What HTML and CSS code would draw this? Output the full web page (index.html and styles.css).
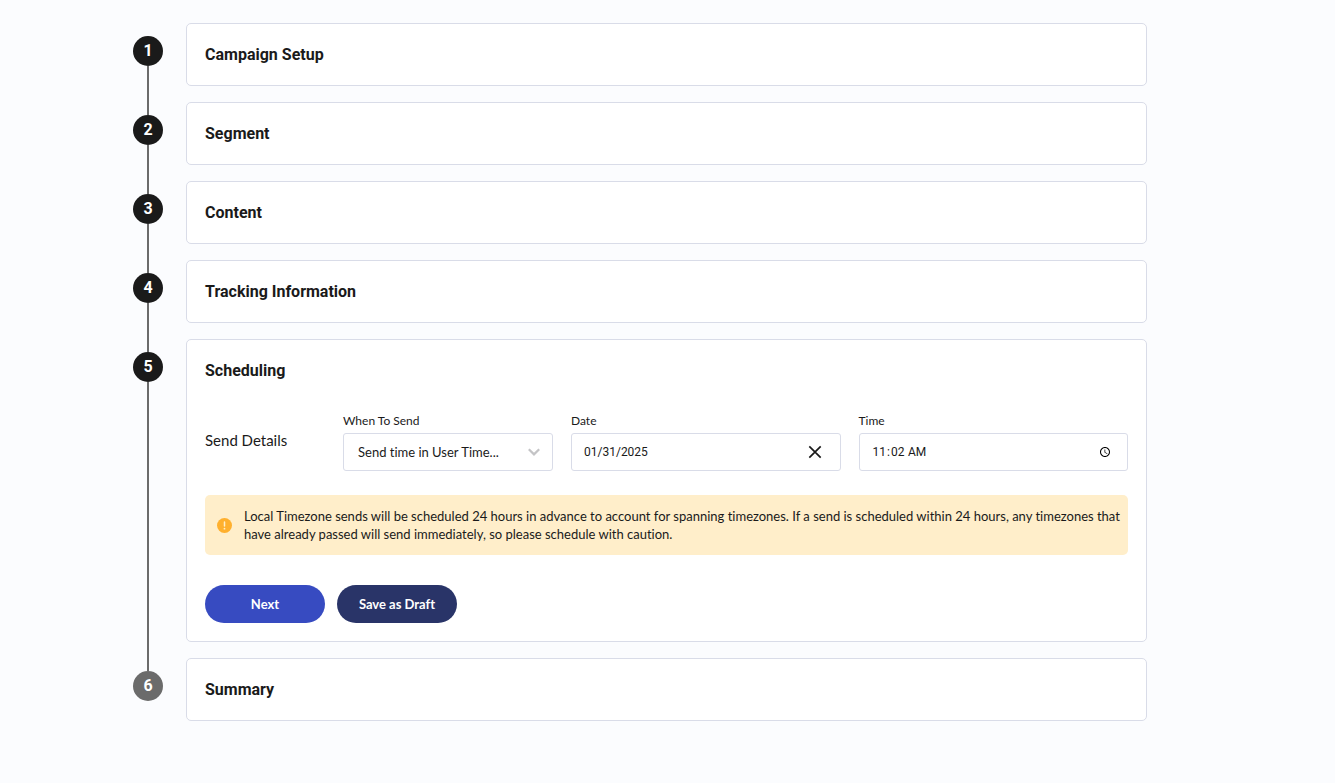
FILE: index.html
```html
<!DOCTYPE html>
<html lang="en">
<head>
<meta charset="utf-8">
<title>Campaign Scheduling</title>
<link rel="stylesheet" href="styles.css">
</head>
<body>
<main>
  <ol class="steps">
    <li class="step">
      <div class="rail"><span class="dot">1</span></div>
      <section class="card"><h2 class="title">Campaign Setup</h2></section>
    </li>
    <li class="step">
      <div class="rail"><span class="dot">2</span></div>
      <section class="card"><h2 class="title">Segment</h2></section>
    </li>
    <li class="step">
      <div class="rail"><span class="dot">3</span></div>
      <section class="card"><h2 class="title">Content</h2></section>
    </li>
    <li class="step">
      <div class="rail"><span class="dot">4</span></div>
      <section class="card"><h2 class="title">Tracking Information</h2></section>
    </li>
    <li class="step">
      <div class="rail"><span class="dot">5</span></div>
      <section class="card">
        <h2 class="title">Scheduling</h2>
        <form class="form">
          <div class="fields">
            <h3 class="group-name">Send Details</h3>
            <div class="field">
              <label class="label" for="when">When To Send</label>
              <div class="control">
                <select class="select" id="when"><option>Send time in User Time...</option></select>
                <svg class="chevron" width="12" height="8" viewBox="0 0 12 8" aria-hidden="true"><path d="M.8 1.2L6 6.4l5.2-5.2" fill="none" stroke="#c4c4c6" stroke-width="2.2"/></svg>
              </div>
            </div>
            <div class="field">
              <label class="label" for="date">Date</label>
              <div class="control">
                <input class="input" id="date" type="text" value="01/31/2025">
                <button class="clear" type="button" aria-label="Clear date">
                  <svg width="14" height="14" viewBox="0 0 14 14" aria-hidden="true"><path d="M1.3 1.3l11.4 11.4M12.7 1.3L1.3 12.7" fill="none" stroke="#1a1a1a" stroke-width="1.7"/></svg>
                </button>
              </div>
            </div>
            <div class="field">
              <label class="label" for="time">Time</label>
              <div class="control">
                <input class="input" id="time" type="time" value="11:02">
              </div>
            </div>
          </div>
          <div class="alert" role="note">
            <svg class="alert-icon" width="15" height="15" viewBox="0 0 15 15" aria-hidden="true"><circle cx="7.5" cy="7.5" r="7.5" fill="#ffb02e"/><path d="M7.5 4v4" stroke="#ffeeca" stroke-width="1.5" stroke-linecap="round"/><circle cx="7.5" cy="10.7" r=".9" fill="#ffeeca"/></svg>
            <p class="alert-text">Local Timezone sends will be scheduled 24 hours in advance to account for spanning timezones. If a send is scheduled within 24 hours, any timezones that have already passed will send immediately, so please schedule with caution.</p>
          </div>
          <div class="actions">
            <button class="button" type="button">Next</button>
            <button class="button button-dark" type="button">Save as Draft</button>
          </div>
        </form>
      </section>
    </li>
    <li class="step">
      <div class="rail"><span class="dot dot-pending">6</span></div>
      <section class="card"><h2 class="title">Summary</h2></section>
    </li>
  </ol>
</main>
</body>
</html>
```
FILE: styles.css
```css
* { box-sizing: border-box; }

body {
  margin: 0;
  background: #fbfcfe;
  color: #1a1a1a;
  font-family: Lato, "Liberation Sans", sans-serif;
  font-size: 13px;
  line-height: 18px;
  font-variant-ligatures: none;
}

.steps {
  list-style: none;
  margin: 0;
  padding: 23px 188px 46px 133px;
}

.step {
  display: grid;
  grid-template-columns: 30px minmax(0, 1fr);
  column-gap: 23px;
}

.rail {
  display: flex;
  flex-direction: column;
  align-items: center;
}

.rail::before,
.rail::after {
  content: "";
  width: 2px;
  background: #6b6b6b;
}

.rail::before { height: 13px; }
.rail::after { flex: 1; }
.step:first-child .rail::before,
.step:last-child .rail::after { background: none; }

.dot {
  display: grid;
  place-items: center;
  width: 30px;
  height: 30px;
  border-radius: 50%;
  background: #1a1a1a;
  color: #fff;
  font: 700 16px/20px Roboto, sans-serif;
}

.dot-pending { background: #6b6b6b; }

.card {
  margin-bottom: 16px;
  padding: 18px;
  border: 1px solid #d9dce8;
  border-radius: 5px;
  background: #fff;
}

.title {
  margin: 0;
  font: 700 16px/25px Roboto, sans-serif;
}

.fields {
  display: grid;
  grid-template-columns: 120px 210px minmax(0, 1fr) minmax(0, 1fr);
  gap: 18px;
  align-items: center;
  margin-top: 29px;
}

.group-name {
  margin: 0;
  padding-bottom: 4px;
  font-size: 15px;
  font-weight: 400;
}

.label {
  display: block;
  margin-bottom: 3px;
  font-size: 12px;
}

.control {
  display: grid;
  align-items: center;
}

.control > * { grid-area: 1 / 1; }

.select,
.input {
  width: 100%;
  height: 38px;
  margin: 0;
  padding: 0 12px;
  border: 1px solid #d9dce8;
  border-radius: 3px;
  background: #fff;
  color: inherit;
  font: inherit;
}

.input {
  font-family: Roboto, sans-serif;
  font-size: 12px;
}

.select {
  padding: 0 14px;
  appearance: none;
}

.chevron {
  justify-self: end;
  margin-right: 13px;
  pointer-events: none;
}

.clear {
  display: flex;
  justify-self: end;
  margin-right: 14px;
  padding: 5px;
  border: 0;
  background: none;
}

.alert {
  display: flex;
  align-items: center;
  gap: 12px;
  margin-top: 24px;
  padding: 12px 4px 12px 12px;
  border-radius: 5px;
  background: #ffeeca;
}

.alert-icon { flex: none; }
.alert-text { margin: 0; }

.actions {
  display: flex;
  gap: 12px;
  margin-top: 30px;
}

.button {
  width: 120px;
  height: 38px;
  padding: 0;
  border: 0;
  border-radius: 19px;
  background: #374bc1;
  color: #fff;
  font: inherit;
  font-weight: 700;
}

.button-dark { background: #293468; }
```
